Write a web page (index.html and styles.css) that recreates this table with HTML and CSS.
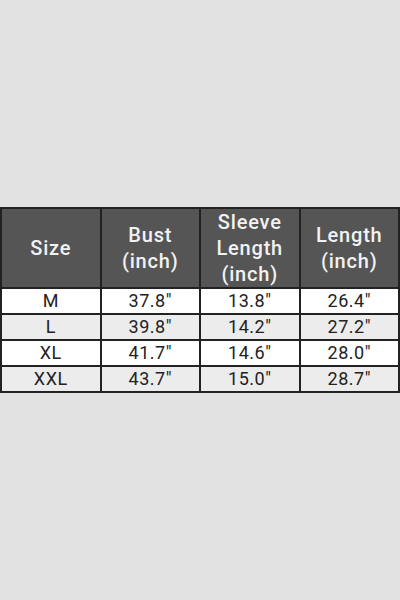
FILE: index.html
```html
<!DOCTYPE html>
<html>
<head>
<meta charset="utf-8">
<link rel="stylesheet" href="styles.css">
</head>
<body>
<div class="page">
  <table class="size-table">
    <thead>
      <tr>
        <th>Size</th>
        <th>Bust<br>(inch)</th>
        <th>Sleeve<br>Length<br>(inch)</th>
        <th>Length<br>(inch)</th>
      </tr>
    </thead>
    <tbody>
      <tr><td>M</td><td>37.8"</td><td>13.8"</td><td>26.4"</td></tr>
      <tr class="alt"><td>L</td><td>39.8"</td><td>14.2"</td><td>27.2"</td></tr>
      <tr><td>XL</td><td>41.7"</td><td>14.6"</td><td>28.0"</td></tr>
      <tr class="alt"><td>XXL</td><td>43.7"</td><td>15.0"</td><td>28.7"</td></tr>
    </tbody>
  </table>
</div>
</body>
</html>
```
FILE: styles.css
```css
html, body {
  margin: 0;
  padding: 0;
  background: #e2e2e2;
}
.page {
  height: 600px;
  display: flex;
  align-items: center;
  justify-content: center;
}
.size-table {
  width: 400px;
  border-collapse: collapse;
  table-layout: fixed;
  font-family: "Roboto", "Liberation Sans", sans-serif;
}
.size-table th,
.size-table td {
  border: 2px solid #222;
  text-align: center;
  padding: 0;
}
.size-table th {
  background: #555555;
  color: #f2f2f2;
  font-weight: 500;
  font-size: 20px;
  letter-spacing: 0.8px;
  line-height: 26px;
  height: 77px;
}
.size-table td {
  background: #ffffff;
  color: #222;
  font-size: 18px;
  letter-spacing: 0.5px;
  line-height: 20px;
  height: 24px;
}
.size-table tr.alt td {
  background: #ececec;
}
```
